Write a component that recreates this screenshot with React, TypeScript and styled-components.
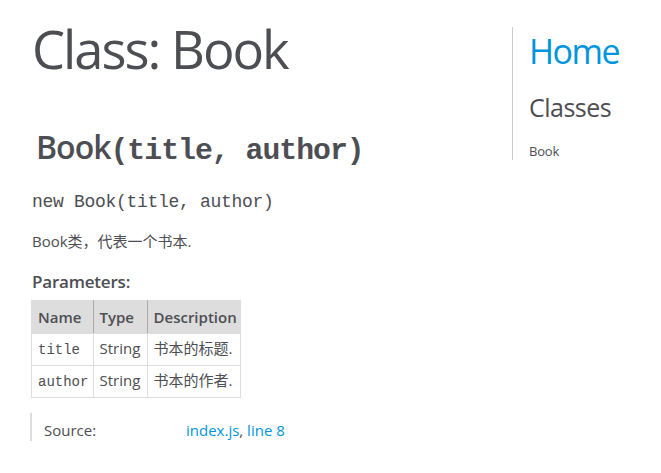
import React from "react";
import styled, { createGlobalStyle } from "styled-components";

const GlobalStyle = createGlobalStyle`
  html, body {
    margin: 0;
    padding: 0;
    background: #ffffff;
  }
  body {
    font-family: "Open Sans", "Noto Sans CJK SC", sans-serif;
    color: #4d4e53;
  }
`;

const SANS = `"Open Sans", "Noto Sans CJK SC", sans-serif`;
const MONO = `"Liberation Mono", "DejaVu Sans Mono", monospace`;

const Page = styled.div`
  display: flex;
  align-items: flex-start;
  width: 661px;
`;

const Main = styled.div`
  box-sizing: border-box;
  width: 512px;
  padding: 19px 0 0 32px;
`;

const Title = styled.h1`
  margin: 0;
  font-family: ${SANS};
  font-size: 52.5px;
  font-weight: 400;
  letter-spacing: -2px;
  line-height: 60px;
  color: #4d4e53;
`;

const Header = styled.header`
  padding: 0 4px;
  margin-top: 48px;
`;

const ClassName = styled.h2`
  margin: 0;
  font-family: ${SANS};
  font-size: 32px;
  font-weight: 600;
  letter-spacing: -1px;
  line-height: 40px;
  color: #4d4e53;
`;

const Signature = styled.span<{ $bold?: boolean }>`
  font-family: ${MONO};
  font-weight: ${(p) => (p.$bold ? 700 : 400)};
`;

const BigSig = styled(Signature)`
  font-size: 29.8px;
  letter-spacing: -1px;
  line-height: 40px;
`;

const Constructor = styled.h4`
  margin: 19px 0 0;
  font-family: ${MONO};
  font-size: 18px;
  font-weight: 400;
  letter-spacing: -0.3px;
  line-height: 24px;
  color: #4d4e53;
`;

const Description = styled.div`
  margin-top: 17px;
  font-family: ${SANS};
  font-size: 15px;
  line-height: 20px;
`;

const SubTitle = styled.h5`
  margin: 20px 0 0;
  font-family: ${SANS};
  font-size: 17px;
  font-weight: 600;
  letter-spacing: -0.2px;
  line-height: 22px;
`;

const Params = styled.table`
  margin: 7px 0 0 -1px;
  border-collapse: collapse;
  border-spacing: 0;
  table-layout: fixed;
  width: 209px;
  font-family: ${SANS};
  font-size: 15px;
`;

const HeadRow = styled.tr`
  background: #dddddd;
`;

const Th = styled.th<{ $last?: boolean }>`
  box-sizing: border-box;
  border: 1px solid #dddddd;
  border-right: 1px solid ${(p) => (p.$last ? "#dddddd" : "#aaaaaa")};
  padding: 4px 6px;
  text-align: left;
  vertical-align: top;
  font-weight: 600;
  line-height: 24px;
  white-space: nowrap;
`;

const Td = styled.td`
  border: 1px solid #dddddd;
  padding: 4px 6px 0;
  height: 27px;
  text-align: left;
  vertical-align: top;
  line-height: 20px;
  white-space: nowrap;
`;

const Code = styled.span`
  font-family: ${MONO};
  font-size: 14px;
`;

const Details = styled.dl`
  display: grid;
  grid-template-columns: 154px auto;
  margin: 15px 0 0 -2px;
  border-left: 2px solid #dddddd;
  font-family: ${SANS};
  font-size: 15px;
  line-height: 22px;
`;

const Dt = styled.dt`
  padding: 6px 0 0 12px;
`;

const Dd = styled.dd`
  margin: 0;
  padding-top: 6px;
`;

const Link = styled.a`
  color: #0095dd;
  text-decoration: none;
`;

const Nav = styled.nav`
  box-sizing: border-box;
  margin-top: 27px;
  width: 149px;
  border-left: 1px solid #cccccc;
  padding: 4px 0 0 16px;
`;

const HomeLink = styled.h2`
  margin: 0;
  font-family: ${SANS};
  font-size: 34px;
  font-weight: 400;
  letter-spacing: -1.5px;
  line-height: 40px;
  color: #0095dd;
`;

const NavTitle = styled.h3`
  margin: 21px 0 0;
  font-family: ${SANS};
  font-size: 25px;
  font-weight: 400;
  letter-spacing: -0.5px;
  line-height: 30px;
  color: #4d4e53;
`;

const NavList = styled.ul`
  list-style: none;
  margin: 20px 0 0;
  padding: 0;
`;

const NavItem = styled.li`
  font-family: ${SANS};
  font-size: 13px;
  line-height: 18px;
  letter-spacing: -0.2px;
  color: #4d4e53;
`;

const params = [
  { name: "title", type: "String", desc: "书本的标题." },
  { name: "author", type: "String", desc: "书本的作者." },
];

export default function App() {
  return (
    <>
      <GlobalStyle />
      <Page>
        <Main>
          <Title>Class: Book</Title>
          <Header>
            <ClassName>
              Book<BigSig $bold>(title, author)</BigSig>
            </ClassName>
          </Header>
          <Constructor>
            new Book<Signature>(title, author)</Signature>
          </Constructor>
          <Description>Book类，代表一个书本.</Description>
          <SubTitle>Parameters:</SubTitle>
          <Params>
            <colgroup>
              <col style={{ width: 61.5 }} />
              <col style={{ width: 54 }} />
              <col style={{ width: 93.5 }} />
            </colgroup>
            <thead>
              <HeadRow>
                <Th>Name</Th>
                <Th>Type</Th>
                <Th $last>Description</Th>
              </HeadRow>
            </thead>
            <tbody>
              {params.map((p) => (
                <tr key={p.name}>
                  <Td>
                    <Code>{p.name}</Code>
                  </Td>
                  <Td>{p.type}</Td>
                  <Td>{p.desc}</Td>
                </tr>
              ))}
            </tbody>
          </Params>
          <Details>
            <Dt>Source:</Dt>
            <Dd>
              <Link href="#">index.js</Link>, <Link href="#">line 8</Link>
            </Dd>
          </Details>
        </Main>
        <Nav>
          <HomeLink>Home</HomeLink>
          <NavTitle>Classes</NavTitle>
          <NavList>
            <NavItem>Book</NavItem>
          </NavList>
        </Nav>
      </Page>
    </>
  );
}
